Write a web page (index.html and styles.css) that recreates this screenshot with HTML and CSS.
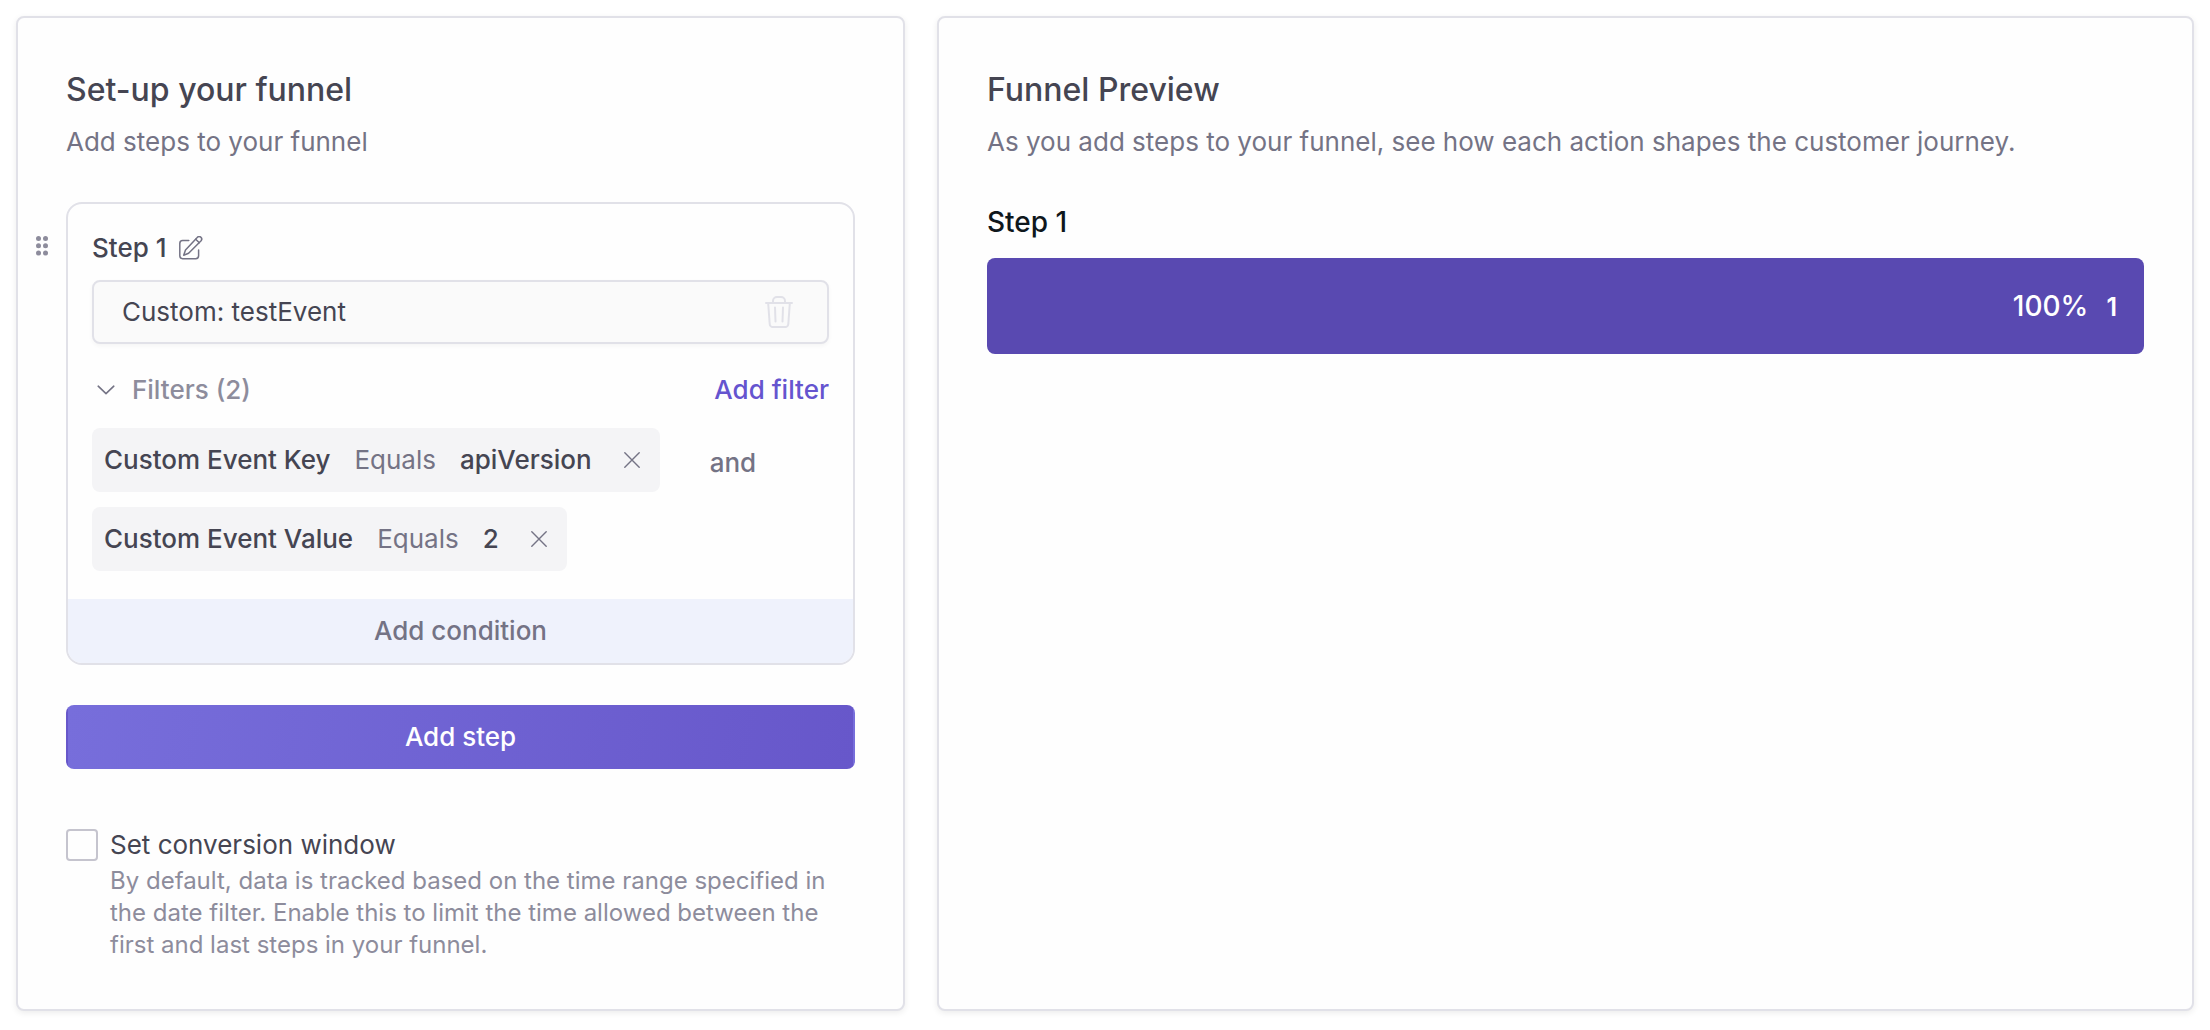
FILE: index.html
```html
<!DOCTYPE html>
<html lang="en">
<head>
<meta charset="utf-8">
<title>Funnel builder</title>
<link rel="stylesheet" href="styles.css">
</head>
<body>
<main class="layout">
  <section class="card setup">
    <h2 class="card-title">Set-up your funnel</h2>
    <p class="card-subtitle">Add steps to your funnel</p>

    <div class="step-row">
      <svg class="drag-handle" width="12" height="20" viewBox="0 0 12 20" fill="currentColor" aria-hidden="true">
        <circle cx="2.5" cy="2.6" r="2.5"/><circle cx="9.5" cy="2.6" r="2.5"/>
        <circle cx="2.5" cy="9.8" r="2.5"/><circle cx="9.5" cy="9.8" r="2.5"/>
        <circle cx="2.5" cy="17" r="2.5"/><circle cx="9.5" cy="17" r="2.5"/>
      </svg>
      <div class="step">
        <div class="step-body">
          <div class="step-header">
            <span class="step-name">Step 1</span>
            <svg class="icon-edit" width="24" height="24" viewBox="0 0 24 24" fill="none" stroke="currentColor" stroke-width="1.5" stroke-linecap="round" stroke-linejoin="round" aria-hidden="true">
              <path d="M9.8 4.6H3.6A2.9 2.9 0 0 0 .8 7.500V19.800A2.900 2.900 0 0 0 3.600 22.700H16.700A2.900 2.900 0 0 0 19.600 19.800V14"/>
              <path d="M18.200 1.500a2.500 2.500 0 0 1 3.900 3.200L9.600 17.200 4.700 19.200 6.500 14z"/><path d="M16.700 3.200l3.600 3.500"/>
            </svg>
          </div>
          <div class="event-field">
            <span>Custom: testEvent</span>
            <svg class="icon-trash" width="28" height="32" viewBox="0 0 28 32" fill="none" stroke="currentColor" stroke-width="2" stroke-linecap="round" stroke-linejoin="round" aria-hidden="true">
              <path d="M1 7H27M8 6.500V5a4 4 0 0 1 4-4h4a4 4 0 0 1 4 4v1.500M3.200 7.500L4.700 28a3 3 0 0 0 3 3H20.300a3 3 0 0 0 3-3L24.800 7.500M10 11.500L10.500 25.500M18 11.500L17.500 25.500"/>
            </svg>
          </div>
          <div class="filters-header">
            <svg class="icon-chevron" width="18" height="10" viewBox="0 0 18 10" fill="none" stroke="currentColor" stroke-width="1.600" stroke-linecap="round" stroke-linejoin="round" aria-hidden="true"><path d="M1.200 1.200L9 8.600L16.800 1.200"/></svg>
            <span class="filters-label">Filters (2)</span>
            <a class="add-filter">Add filter</a>
          </div>
          <div class="filters">
            <div class="filter">
              <span class="filter-term">Custom Event Key</span>
              <span class="filter-op">Equals</span>
              <span class="filter-term">apiVersion</span>
              <svg class="icon-close" width="16" height="16" viewBox="0 0 16 16" fill="none" stroke="currentColor" stroke-width="1.400" stroke-linecap="round" aria-hidden="true"><path d="M.8.8L15.200 15.200M15.200.8L.8 15.200"/></svg>
            </div>
            <span class="joiner">and</span>
            <div class="filter">
              <span class="filter-term">Custom Event Value</span>
              <span class="filter-op">Equals</span>
              <span class="filter-term">2</span>
              <svg class="icon-close" width="16" height="16" viewBox="0 0 16 16" fill="none" stroke="currentColor" stroke-width="1.400" stroke-linecap="round" aria-hidden="true"><path d="M.8.8L15.200 15.200M15.200.8L.8 15.200"/></svg>
            </div>
          </div>
        </div>
        <button class="add-condition">Add condition</button>
      </div>
    </div>

    <button class="add-step">Add step</button>

    <label class="conversion">
      <span class="checkbox"></span>
      <span class="conversion-text">
        <span class="conversion-label">Set conversion window</span>
        <span class="conversion-help">By default, data is tracked based on the time range specified in the date filter. Enable this to limit the time allowed between the first and last steps in your funnel.</span>
      </span>
    </label>
  </section>

  <section class="card preview">
    <h2 class="card-title">Funnel Preview</h2>
    <p class="card-subtitle">As you add steps to your funnel, see how each action shapes the customer journey.</p>
    <h3 class="preview-step">Step 1</h3>
    <div class="bar">
      <span class="bar-percent">100%</span>
      <span class="bar-count">1</span>
    </div>
  </section>
</main>
</body>
</html>
```
FILE: styles.css
```css
* { box-sizing: border-box; }

body {
  margin: 0;
  background: #fff;
  color: #454552;
  font-family: Inter, sans-serif;
  font-size: 26px;
  line-height: 40px;
}

h2, h3, p { margin: 0; }

button {
  display: block;
  width: 100%;
  border: 0;
  padding: 0;
  font: inherit;
  font-weight: 500;
}

svg { display: block; flex: none; }

.layout {
  display: grid;
  grid-template-columns: 889px 1257px;
  column-gap: 32px;
  padding: 16px;
}

.card {
  height: 995px;
  padding: 48px;
  border: 2px solid #e1e1e8;
  border-radius: 8px;
  background: #fefefe;
  box-shadow: 0 2px 6px rgba(0, 0, 0, .08);
}

.card-title {
  padding-top: 2px;
  font-size: 32px;
  font-weight: 500;
  line-height: 44px;
}

.card-subtitle {
  margin-top: 10px;
  color: #747385;
  line-height: 40px;
}

.step-row {
  display: flex;
  margin-top: 40px;
  margin-left: -30px;
  gap: 18px;
}

.drag-handle { margin-top: 34px; color: #8d8c9c; }

.step {
  flex: 1;
  height: 463px;
  display: flex;
  flex-direction: column;
  justify-content: space-between;
  border: 2px solid #e1e1e8;
  border-radius: 16px;
  overflow: hidden;
}

.step-body { padding: 24px 24px 0; }

.step-header {
  display: flex;
  align-items: center;
  gap: 13px;
  height: 40px;
}

.step-name { font-weight: 500; }

.icon-edit { color: #747385; }

.event-field {
  display: flex;
  align-items: center;
  justify-content: space-between;
  height: 64px;
  margin-top: 12px;
  padding: 0 34px 0 28px;
  border: 2px solid #e1e1e8;
  border-radius: 8px;
  background: #fafafa;
  box-shadow: 0 2px 4px rgba(0, 0, 0, .04);
}

.icon-trash { color: #e1e1e8; }

.filters-header {
  display: flex;
  align-items: center;
  height: 40px;
  margin-top: 26px;
  padding-left: 5px;
  font-weight: 500;
}

.icon-chevron { color: #747385; }

.filters-label { margin-left: 17px; color: #8d8c9c; }

.add-filter { margin-left: auto; color: #6554cf; }

.filters {
  display: flex;
  flex-wrap: wrap;
  align-items: center;
  margin-top: 18px;
  row-gap: 15px;
}

.filter {
  display: flex;
  align-items: center;
  height: 64px;
  padding: 0 20px 0 12px;
  border-radius: 8px;
  background: #f4f4f6;
}

.filter-term { font-weight: 500; }

.filter-op { margin: 0 24px; color: #747385; }

.icon-close { margin-left: 32px; color: #747385; }

.joiner {
  margin: 5px 0 0 50px;
  color: #747385;
  font-weight: 500;
}

.add-condition {
  height: 64px;
  background: #eff2fc;
  color: #747385;
}

/* The gradient is sized to the padding box and repeats under the clear
   side borders, which gives the button its thin contrasting edges. */
.add-step {
  height: 64px;
  margin-top: 40px;
  border: solid transparent;
  border-width: 0 2px;
  border-radius: 8px;
  background: linear-gradient(100deg, #776edb, #6757ca);
  color: #fff;
}

.conversion {
  display: flex;
  gap: 12px;
  margin-top: 60px;
}

.checkbox {
  flex: none;
  width: 32px;
  height: 32px;
  border: 2px solid #c5c4ce;
  border-radius: 4px;
}

.conversion-text { display: flex; flex-direction: column; }

.conversion-label { line-height: 32px; }

.conversion-help {
  margin-top: 4px;
  color: #8d8c9c;
  font-size: 24px;
  line-height: 32px;
}

.preview-step {
  margin-top: 40px;
  color: #0f171c;
  font-size: 28px;
  font-weight: 500;
  line-height: 40px;
}

.bar {
  display: flex;
  align-items: baseline;
  justify-content: flex-end;
  gap: 18px;
  height: 96px;
  margin-top: 16px;
  padding: 28px 27px 28px 0;
  border-radius: 8px;
  background: #5949b1;
  color: #fff;
}

.bar-percent { font-size: 28px; font-weight: 500; }

.bar-count { font-size: 25px; font-weight: 600; }
```
